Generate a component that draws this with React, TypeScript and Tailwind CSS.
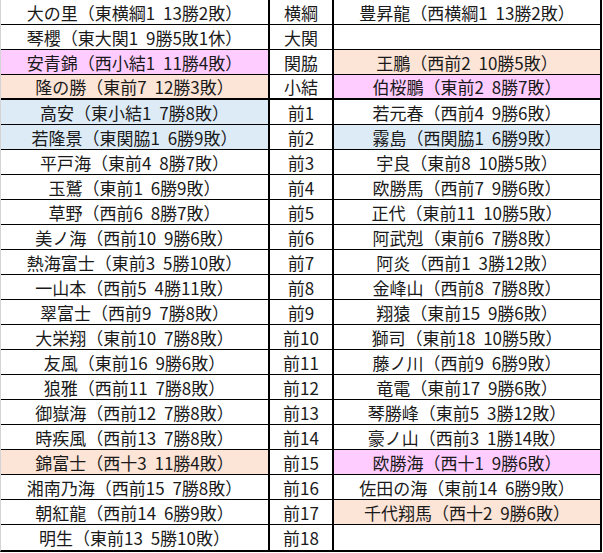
type Tint = 'pink' | 'peach' | 'blue' | undefined;

interface Row {
  east: string;
  eastTint?: Tint;
  rank: string;
  west: string;
  westTint?: Tint;
}

const rows: Row[] = [
  { east: '大の里（東横綱1 13勝2敗）', rank: '横綱', west: '豊昇龍（西横綱1 13勝2敗）' },
  { east: '琴櫻（東大関1 9勝5敗1休）', rank: '大関', west: '' },
  { east: '安青錦（西小結1 11勝4敗）', eastTint: 'pink', rank: '関脇', west: '王鵬（西前2 10勝5敗）', westTint: 'peach' },
  { east: '隆の勝（東前7 12勝3敗）', eastTint: 'peach', rank: '小結', west: '伯桜鵬（東前2 8勝7敗）', westTint: 'pink' },
  { east: '高安（東小結1 7勝8敗）', eastTint: 'blue', rank: '前1', west: '若元春（西前4 9勝6敗）' },
  { east: '若隆景（東関脇1 6勝9敗）', eastTint: 'blue', rank: '前2', west: '霧島（西関脇1 6勝9敗）', westTint: 'blue' },
  { east: '平戸海（東前4 8勝7敗）', rank: '前3', west: '宇良（東前8 10勝5敗）' },
  { east: '玉鷲（東前1 6勝9敗）', rank: '前4', west: '欧勝馬（西前7 9勝6敗）' },
  { east: '草野（西前6 8勝7敗）', rank: '前5', west: '正代（東前11 10勝5敗）' },
  { east: '美ノ海（西前10 9勝6敗）', rank: '前6', west: '阿武剋（東前6 7勝8敗）' },
  { east: '熱海富士（東前3 5勝10敗）', rank: '前7', west: '阿炎（西前1 3勝12敗）' },
  { east: '一山本（西前5 4勝11敗）', rank: '前8', west: '金峰山（西前8 7勝8敗）' },
  { east: '翠富士（西前9 7勝8敗）', rank: '前9', west: '翔猿（東前15 9勝6敗）' },
  { east: '大栄翔（東前10 7勝8敗）', rank: '前10', west: '獅司（東前18 10勝5敗）' },
  { east: '友風（東前16 9勝6敗）', rank: '前11', west: '藤ノ川（西前9 6勝9敗）' },
  { east: '狼雅（西前11 7勝8敗）', rank: '前12', west: '竜電（東前17 9勝6敗）' },
  { east: '御嶽海（西前12 7勝8敗）', rank: '前13', west: '琴勝峰（東前5 3勝12敗）' },
  { east: '時疾風（西前13 7勝8敗）', rank: '前14', west: '豪ノ山（西前3 1勝14敗）' },
  { east: '錦富士（西十3 11勝4敗）', eastTint: 'peach', rank: '前15', west: '欧勝海（西十1 9勝6敗）', westTint: 'pink' },
  { east: '湘南乃海（西前15 7勝8敗）', rank: '前16', west: '佐田の海（東前14 6勝9敗）' },
  { east: '朝紅龍（西前14 6勝9敗）', rank: '前17', west: '千代翔馬（西十2 9勝6敗）', westTint: 'peach' },
  { east: '明生（東前13 5勝10敗）', rank: '前18', west: '' },
];

const tintClass = (t: Tint) => {
  switch (t) {
    case 'pink':
      return 'bg-[#ffccff]';
    case 'peach':
      return 'bg-[#fce4d6]';
    case 'blue':
      return 'bg-[#ddebf7]';
    default:
      return 'bg-white';
  }
};

export default function App() {
  return (
    <div
      className="w-[603px] h-[553px] bg-white text-[#1a1a1a] text-[17px] leading-none [word-spacing:4px]"
      style={{ fontFamily: '"Noto Sans CJK JP", "Noto Sans", sans-serif' }}
    >
      <div className="w-[602px] box-border border-l border-l-[#d4d4d4] border-r-2 border-b-2 border-r-black border-b-black">
        {rows.map((r, i) => {
          const last = i === rows.length - 1;
          const thick = i === 3;
          return (
            <div
              key={i}
              className={`flex h-[25px] box-border border-black ${
                last ? '' : thick ? 'border-b-2' : 'border-b'
              }`}
            >
              <div
                className={`w-[267px] flex items-center justify-center whitespace-nowrap ${tintClass(r.eastTint)}`}
              >
                {r.east}
              </div>
              <div className="w-[64px] box-border border-l-2 border-black flex items-center justify-center whitespace-nowrap">
                {r.rank}
              </div>
              <div
                className={`flex-1 box-border border-l-2 border-black flex items-center justify-center whitespace-nowrap ${tintClass(r.westTint)}`}
              >
                {r.west}
              </div>
            </div>
          );
        })}
      </div>
    </div>
  );
}
